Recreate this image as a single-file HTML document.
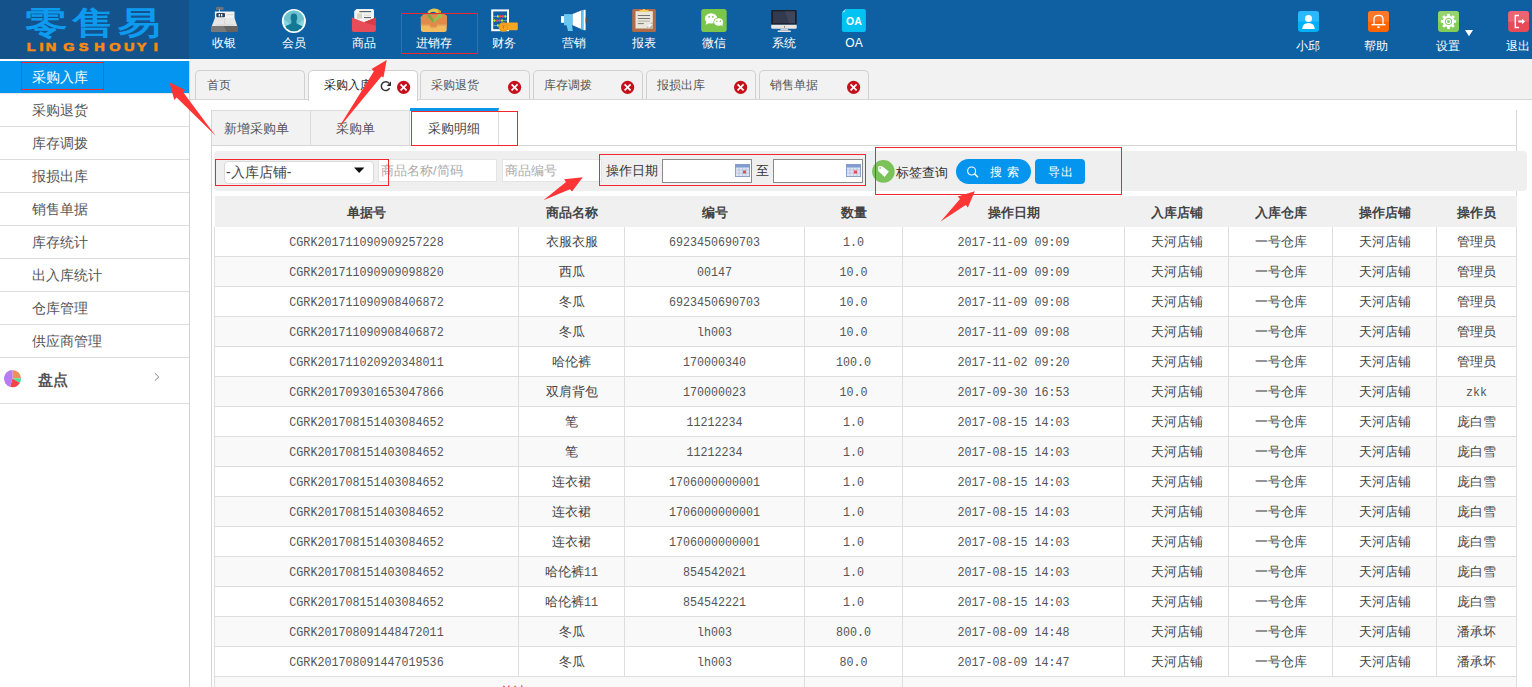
<!DOCTYPE html>
<html><head><meta charset="utf-8">
<style>
*{box-sizing:border-box;margin:0;padding:0}
html,body{width:1532px;height:687px;overflow:hidden;background:#fff;font-family:"Liberation Sans",sans-serif;color:#333}
.abs{position:absolute}
#hdr{position:absolute;left:0;top:0;width:1532px;height:59px;background:#0f5fa3}
#logo{position:absolute;left:0;top:0;width:189px;height:59px;background:#14528b}
.nt{position:absolute;top:34px;width:70px;text-align:center;color:#fff;font-size:12px;line-height:18px;font-weight:500}
.rt{position:absolute;top:37px;width:70px;text-align:center;color:#fff;font-size:12px;line-height:18px;font-weight:500}
#side{position:absolute;left:0;top:61px;width:190px;height:626px;background:#fff;border-right:1px solid #d2d2d2}
#side .it{height:33px;border-bottom:1px solid #dcdcdc;font-size:14px;line-height:32px;padding-left:32px;color:#555}
#side .it.act{background:#0395ef;color:#fff;border-bottom-color:#e6e6e6}
#tabbar{position:absolute;left:190px;top:59px;width:1342px;height:41px;background:#f2f2f2;border-bottom:1px solid #d6d6d6}
.tab{position:absolute;top:11px;height:29px;width:110px;border:1px solid #d0d0d0;border-bottom:none;border-radius:5px 5px 0 0;background:#f2f2f2;font-size:12px;color:#555;line-height:28px}
.tab.act{background:#fff;color:#222;height:31px}
.tab span{top:-0.5px}
#panel{position:absolute;left:211px;top:110px;width:1306px;height:600px;border-left:1px solid #d6d6d6;border-right:1px solid #d6d6d6}
#subbar{position:absolute;left:0;top:0;width:1304px;height:36px;border-bottom:1px solid #d6d6d6}
.stab{position:absolute;top:0;height:35px;width:100px;background:#f2f2f2;border-right:1px solid #dcdcdc;border-top:1px solid #dcdcdc;font-size:13px;color:#555;line-height:36px}
.stab.act{background:#fff;border-top:3px solid #0896ec;top:-2px;height:37px;line-height:36px;color:#444}
#fbar{position:absolute;left:214px;top:151px;width:1313px;height:40px;background:#efefef;border-radius:4px}
.inp{position:absolute;background:#fff;border:1px solid #e4e4e4;font-size:13px;color:#aaa;line-height:21px;padding-left:2px}
.red{position:absolute;border:1.5px solid #f0282d}
table{position:absolute;left:214px;top:196px;border-collapse:collapse;table-layout:fixed;width:1302.5px}
th{height:31px;padding-top:2px !important;background:#f0f0f0;font-size:13px;font-weight:bold;color:#444;text-align:center;padding:0}
td{height:30px;border:1px solid #dedede;text-align:center;font-size:13px;color:#444;padding:2px 0 0 0;white-space:nowrap}
tr.ev td{background:#f9f9f9}
tbody tr:first-child td{border-top:none;height:29px}
.m{font-family:"Liberation Mono",monospace;font-size:11.7px;color:#555;display:inline-block;transform:scaleY(1.12)}
.c{font-size:13px}
td.tot span{color:#e02020;font-size:13px;position:relative;top:0px;left:3px}
</style></head><body>
<div id="hdr">
  <div id="logo">
    <svg class="abs" style="left:0;top:0" width="189" height="59">
      <g transform="scale(1.33,1)"><text x="18.6 53.9 88.9" y="34.5" font-family="Liberation Sans" font-weight="bold" font-size="32" fill="#0d9bf0">零售易</text></g>
      <g transform="scale(1.32,1)"><text x="20.2 29.9 34.7 47.9 59.6 71.4 82.7 93.9 103.7 116.5" y="51" font-family="Liberation Sans" font-weight="bold" font-size="11" fill="#fb8a0c" stroke="#fb8a0c" stroke-width="0.6">LINGSHOUYI</text></g>
    </svg>
  </div>
  <svg class="abs" style="left:0;top:0" width="1532" height="59" viewBox="0 0 1532 59">
<!-- 收银 cash register -->
<rect x="216" y="7" width="7.6" height="3" rx="0.8" fill="#6f7378"/>
<rect x="219" y="9.5" width="1" height="2.5" fill="#cfd2d4"/>
<rect x="214.9" y="11.5" width="19.6" height="7" fill="#f2f2f2"/>
<path d="M214.9 18 L234.5 18 L237.2 26 L211.8 26 Z" fill="#e6e6e6"/>
<path d="M224.6 18.5 L224.6 25 M216.5 25 L224 25 M225.2 25 L234 25" stroke="#cfcfcf" stroke-width="0.7"/>
<rect x="216.3" y="13" width="8.7" height="4.2" rx="1" fill="#2b3f5e"/>
<rect x="218.6" y="14" width="1.3" height="2.4" fill="#fff"/>
<rect x="221" y="14" width="1.3" height="2.4" fill="#fff"/>
<rect x="226.5" y="14.2" width="7" height="1" fill="#d4d4d4"/>
<rect x="210.9" y="26" width="27" height="6" rx="0.8" fill="#7a7a7a"/>
<path d="M223.5 26 L237.9 26 L237.9 32 L227 32 Z" fill="#646464"/>
<!-- 会员 -->
<circle cx="293.9" cy="20.9" r="12" fill="#fff"/>
<circle cx="293.9" cy="20.9" r="10.3" fill="#86d8e0"/>
<path d="M283.7 19.3 A10.3 10.3 0 0 1 304.1 19.3 L294 27 Z" fill="#6cc2cc"/>
<clipPath id="cp1"><circle cx="293.9" cy="20.9" r="10.3"/></clipPath>
<g clip-path="url(#cp1)" fill="#137896">
<ellipse cx="293.9" cy="17.8" rx="3.3" ry="4.2"/>
<path d="M291.6 20.5 L296.2 20.5 L296.6 23.5 L303 26.5 L304 32 L284 32 L284.8 26.5 L291.2 23.5 Z"/>
</g>
<!-- 商品 -->
<path d="M356.5 8.9 L372.5 8.9 Q374 8.9 374 10.4 L374 23 L354.2 23 L354.2 11.2 Z" fill="#f3f3f1"/>
<rect x="359.3" y="11" width="11.8" height="1.2" fill="#5d6570"/>
<rect x="357" y="13.6" width="5" height="5" fill="#d6d3c6"/>
<rect x="364" y="14.6" width="7" height="0.9" fill="#d6d6d6"/>
<rect x="364" y="17" width="7" height="1.1" fill="#5d6570"/>
<path d="M351.9 17.6 L364 22.3 L375.9 17.6 L375.9 30 Q375.9 32 373.9 32 L353.9 32 Q351.9 32 351.9 30 Z" fill="#e84c58"/>
<path d="M364 22.3 L375.9 17.6 L375.9 26 Z" fill="#d63c48"/>
<!-- 进销存 -->
<path d="M423.5 14.6 L444.2 14.6 Q446.7 14.6 446.7 17.1 L446.7 29.5 Q446.7 32 444.2 32 L423.4 32 Q420.9 32 420.9 29.5 L420.9 17.2 Z" fill="#f2bb62"/>
<path d="M423.5 14.6 L444.2 14.6 Q446.7 14.6 446.7 17.1 L446.7 24.8 L437.5 24.8 Q436.8 27.3 434.5 27.3 L432.5 27.3 Q430.2 27.3 429.5 24.8 L420.9 24.8 L420.9 17.2 Z" fill="#de8b4b"/>
<path d="M420.9 24.8 L429.5 24.8 Q430.2 27.3 432.5 27.3 L434.5 27.3 Q436.8 27.3 437.5 24.8 L446.7 24.8 L446.7 26 L437.8 26 Q437 28.3 434.5 28.3 L432.5 28.3 Q430 28.3 429.2 26 L420.9 26 Z" fill="#e9a457"/>
<path d="M427.2 12.2 Q433 5.5 440.8 11 L441.5 17 L438.6 14.5 Q434 9.8 429.5 13.2 Z" fill="#e6c84e"/>
<path d="M438.6 14.5 L441.5 17 L440.8 11 Q439.5 10 438 9.5 Z" fill="#c9a232"/>
<path d="M427 15.8 L429.4 14 L433.4 19.6 L438.2 15.6 L436.8 14.5 L441.8 13.8 L441 18.6 L439.7 17.4 L433.4 22.8 Z" fill="#8fc454"/>
<path d="M427 15.8 L429.4 14 L433.4 19.6 L433.4 22.8 Z" fill="#72a83e"/>
<!-- 财务 -->
<rect x="492.2" y="10.4" width="15.8" height="19.8" fill="none" stroke="#fff" stroke-width="2"/>
<path d="M493.2 16.4 L507 16.4 M493.2 20.6 L507 20.6 M493.2 25.5 L500 25.5" stroke="#b8c8d8" stroke-width="0.6"/>
<g fill="#b6f000"><ellipse cx="497.9" cy="16.4" rx="0.9" ry="1.4"/><ellipse cx="505.3" cy="16.4" rx="0.9" ry="1.4"/><ellipse cx="494.5" cy="20.6" rx="0.9" ry="1.4"/><ellipse cx="502" cy="20.6" rx="0.9" ry="1.4"/><ellipse cx="497.9" cy="25.5" rx="0.9" ry="1.4"/></g>
<g fill="#f04858"><ellipse cx="500.3" cy="16.4" rx="0.9" ry="1.4"/><ellipse cx="502.8" cy="16.4" rx="0.9" ry="1.4"/><ellipse cx="496.9" cy="20.6" rx="0.9" ry="1.4"/><ellipse cx="499.5" cy="20.6" rx="0.9" ry="1.4"/></g>
<rect x="506" y="22.5" width="11.8" height="7.8" rx="1" fill="#f5a623"/>
<circle cx="503.4" cy="27" r="4.8" fill="#f19a14"/>
<circle cx="503.4" cy="27" r="3.3" fill="#f5a522"/>
<path d="M502.3 25 L503.4 26.6 L504.5 25 M503.4 26.6 L503.4 29" stroke="#c0601a" stroke-width="0.6" fill="none"/>
<!-- 营销 -->
<rect x="561" y="16.1" width="3" height="6.7" fill="#fff"/>
<rect x="564" y="14.1" width="8.6" height="11.2" fill="#66c8ee"/>
<path d="M566.5 25 L572 25 L572.8 31 L568 31 Z" fill="#66c8ee"/>
<path d="M572.6 14.1 L581.2 10.6 L581.2 29.1 L572.6 25.3 Z" fill="#fff"/>
<rect x="581.2" y="10.2" width="2.3" height="19.5" fill="#66c8ee"/>
<rect x="583.5" y="9.8" width="2.1" height="20.4" fill="#fff"/>
<path d="M585.6 17.5 A2.4 2.8 0 0 1 585.6 23.3 Z" fill="#5a4e48"/>
<!-- 报表 -->
<rect x="632.2" y="8.9" width="23.7" height="23.1" rx="1.5" fill="#b06c48"/>
<path d="M635.5 11.2 L652.8 11.2 L652.8 28.5 L635.5 28.5 Z" fill="#e9e7dd"/>
<path d="M646 28.5 L652.8 21.5 L652.8 28.5 Z" fill="#b5b3a9"/>
<path d="M648.5 28.5 L652.8 24 L648.5 24.5 Z" fill="#fff"/>
<path d="M638.8 12 Q638.8 10 641 10 L642.5 10 Q643.5 8 645.5 10 L647 10 Q649.3 10 649.3 12 Z" fill="#f5cf5d"/>
<g fill="#6b6a63"><rect x="637.8" y="15" width="12.3" height="0.9"/><rect x="637.8" y="18" width="12.3" height="0.9"/><rect x="637.8" y="20.6" width="12.3" height="1" fill="#b2b0a7"/><rect x="637.8" y="23.2" width="6" height="0.9"/></g>
<!-- 微信 -->
<rect x="701.2" y="8.9" width="25.5" height="23.1" rx="2.8" fill="#7bc54d"/>
<ellipse cx="711.1" cy="18.4" rx="6.2" ry="5.2" fill="#fff"/>
<path d="M706.5 21 L705.8 24.8 L709.5 22.8 Z" fill="#fff"/>
<ellipse cx="718.6" cy="22" rx="5.2" ry="4.5" fill="#7bc54d"/>
<ellipse cx="718.6" cy="22" rx="4.4" ry="3.8" fill="#fff"/>
<path d="M720.5 24.5 L722.8 26.5 L722.2 23.5 Z" fill="#fff"/>
<g fill="#7bc54d"><circle cx="709.1" cy="16.8" r="0.9"/><circle cx="712.8" cy="16.8" r="0.9"/><circle cx="716.8" cy="21.3" r="0.75"/><circle cx="720.4" cy="21.3" r="0.75"/></g>
<!-- 系统 -->
<path d="M771.2 11 Q771.2 9.9 772.3 9.9 L795.6 9.9 Q796.7 9.9 796.7 11 L796.7 24.8 L771.2 24.8 Z" fill="#1c1e2a"/>
<rect x="773" y="11.4" width="22" height="11.8" fill="#333a4f"/>
<path d="M785 11.4 L795 11.4 L795 23.2 L789 23.2 Z" fill="#3f4659"/>
<path d="M771.2 24.8 L796.7 24.8 L796.7 27.5 Q796.7 28.7 795.5 28.7 L772.4 28.7 Q771.2 28.7 771.2 27.5 Z" fill="#e7e6e3"/>
<rect x="784" y="26.3" width="0.8" height="1.2" fill="#333"/>
<path d="M781 28.7 L787.6 28.7 L788.8 30.6 L779.8 30.6 Z" fill="#cfcfcd"/>
<rect x="777.5" y="30.4" width="13.5" height="1.5" rx="0.7" fill="#e5e5e3"/>
<!-- OA -->
<path d="M845.5 8.9 L863.9 8.9 Q865.9 8.9 865.9 10.9 L865.9 30 Q865.9 32 863.9 32 L843.9 32 Q841.9 32 841.9 30 L841.9 12.5 Z" fill="#00c2f3"/>
<path d="M841.9 12.5 L845.5 8.9 L844.8 12 Z" fill="#9fe6fb"/>
<text x="853.9" y="25" text-anchor="middle" font-family="Liberation Sans" font-weight="bold" font-size="10.5" fill="#fff">OA</text>
<!-- 小邱 -->
<rect x="1298" y="11" width="21" height="21" rx="3.2" fill="#00b0f8"/>
<path d="M1298 21.5 L1298 14.2 Q1298 11 1301.2 11 L1315.8 11 Q1319 11 1319 14.2 L1319 21.5 Z" fill="#2ab9ff"/>
<circle cx="1308.5" cy="18.5" r="3.5" fill="#fff"/>
<path d="M1302.2 29 Q1302.5 23 1308.5 23 Q1314.5 23 1314.8 29 Z" fill="#fff"/>
<!-- 帮助 -->
<rect x="1368" y="11" width="21" height="21" rx="3.2" fill="#ff6600"/>
<path d="M1368 21.5 L1368 14.2 Q1368 11 1371.2 11 L1385.8 11 Q1389 11 1389 14.2 L1389 21.5 Z" fill="#ff782a"/>
<path d="M1374 24.6 L1374 19 Q1374 15.3 1378.5 15.3 Q1383 15.3 1383 19 L1383 24.6" fill="none" stroke="#fff" stroke-width="1.3"/>
<rect x="1371.5" y="24" width="14" height="1.4" fill="#fff"/>
<ellipse cx="1378.5" cy="27.3" rx="1.4" ry="1" fill="#fff"/>
<!-- 设置 -->
<rect x="1438" y="11" width="21" height="21" rx="3.2" fill="#82cc58"/>
<path d="M1438 21.5 L1438 14.2 Q1438 11 1441.2 11 L1455.8 11 Q1459 11 1459 14.2 L1459 21.5 Z" fill="#96d46e"/>
<g fill="#fff" transform="translate(1448.5 21.5)">
<circle r="5.8"/>
<g id="teeth"><rect x="-1.3" y="-7.6" width="2.6" height="3"/><rect x="-1.3" y="4.6" width="2.6" height="3"/><rect x="-7.6" y="-1.3" width="3" height="2.6"/><rect x="4.6" y="-1.3" width="3" height="2.6"/></g>
<g transform="rotate(45)"><rect x="-1.3" y="-7.6" width="2.6" height="3"/><rect x="-1.3" y="4.6" width="2.6" height="3"/><rect x="-7.6" y="-1.3" width="3" height="2.6"/><rect x="4.6" y="-1.3" width="3" height="2.6"/></g>
</g>
<circle cx="1448.5" cy="21.5" r="3.6" fill="#88cf5f"/>
<circle cx="1448.5" cy="21.5" r="2.6" fill="#fff"/>
<circle cx="1448.5" cy="21.5" r="1.5" fill="#88cf5f"/>
<path d="M1465 30 L1473 30 L1469 36.3 Z" fill="#fff"/>
<!-- 退出 -->
<rect x="1508.2" y="11" width="20.8" height="21" rx="3.2" fill="#e84a58"/>
<path d="M1508.2 21.7 L1508.2 14.2 Q1508.2 11 1511.4 11 L1525.8 11 Q1529 11 1529 14.2 L1529 21.7 Z" fill="#ee6572"/>
<path d="M1519 15.5 L1515.3 15.5 L1515.3 27.5 L1519 27.5" fill="none" stroke="#fff" stroke-width="1.4"/>
<rect x="1518.3" y="20.5" width="3.8" height="2" fill="#fff"/>
<path d="M1522 18.8 L1525 21.5 L1522 24.2 Z" fill="#fff"/>
</svg>

  <div class="nt" style="left:189px">收银</div>
  <div class="nt" style="left:259px">会员</div>
  <div class="nt" style="left:329px">商品</div>
  <div class="nt" style="left:399px">进销存</div>
  <div class="nt" style="left:469px">财务</div>
  <div class="nt" style="left:539px">营销</div>
  <div class="nt" style="left:609px">报表</div>
  <div class="nt" style="left:679px">微信</div>
  <div class="nt" style="left:749px">系统</div>
  <div class="nt" style="left:819px">OA</div>
  <div class="rt" style="left:1273px">小邱</div>
  <div class="rt" style="left:1341px">帮助</div>
  <div class="rt" style="left:1413px">设置</div>
  <div class="rt" style="left:1483px">退出</div>
</div>
<div id="side">
  <div class="it act">采购入库</div>
  <div class="it">采购退货</div>
  <div class="it">库存调拨</div>
  <div class="it">报损出库</div>
  <div class="it">销售单据</div>
  <div class="it">库存统计</div>
  <div class="it">出入库统计</div>
  <div class="it">仓库管理</div>
  <div class="it">供应商管理</div>
  <div class="it" style="height:46px;line-height:44px;padding-left:38px;font-weight:bold;font-size:15px;color:#555">盘点</div>
</div>
<svg class="abs" style="left:0;top:358px" width="190" height="46">
  <path d="M12.5 20.6 L12.5 12 A8.6 8.6 0 0 1 21.1 20.6 Z" fill="#e8925c"/>
  <path d="M12.5 20.6 L21.1 20.6 A8.6 8.6 0 0 1 19.8 25 Z" fill="#3ee79c"/>
  <path d="M12.5 20.6 L19.8 25 A8.6 8.6 0 0 1 10 28.8 Z" fill="#f24449"/>
  <path d="M12.5 20.6 L10 28.8 A8.6 8.6 0 0 1 12.5 12 Z" fill="#b77cf2"/>
  <path d="M154.8 15.2 L158.8 19 L154.8 22.6" fill="none" stroke="#777" stroke-width="0.9"/>
</svg>
<div id="tabbar">
  <div class="tab" style="left:5px"><span class="abs" style="left:11px">首页</span></div>
  <div class="tab act" style="left:118px"><span class="abs" style="left:15px">采购入库</span></div>
  <div class="tab" style="left:230px"><span class="abs" style="left:10px">采购退货</span></div>
  <div class="tab" style="left:343px"><span class="abs" style="left:10px">库存调拨</span></div>
  <div class="tab" style="left:456px"><span class="abs" style="left:10px">报损出库</span></div>
  <div class="tab" style="left:569px"><span class="abs" style="left:10px">销售单据</span></div>
</div>
<svg class="abs" style="left:0;top:59px" width="1532" height="41">
  <path d="M389.6 29.2 A4.4 4.4 0 1 1 389 24.2" fill="none" stroke="#333" stroke-width="1.5"/>
  <path d="M391 22.3 L391 27 L386.6 27 Z" fill="#333"/>
  <g id="xx">
  </g>
  <circle cx="403.6" cy="28.3" r="6.6" fill="#c4111c"/><path d="M400.6 25.3 L406.6 31.3 M406.6 25.3 L400.6 31.3" stroke="#fff" stroke-width="1.7"/><circle cx="514.6" cy="28.3" r="6.6" fill="#c4111c"/><path d="M511.6 25.3 L517.6 31.3 M517.6 25.3 L511.6 31.3" stroke="#fff" stroke-width="1.7"/><circle cx="627.6" cy="28.3" r="6.6" fill="#c4111c"/><path d="M624.6 25.3 L630.6 31.3 M630.6 25.3 L624.6 31.3" stroke="#fff" stroke-width="1.7"/><circle cx="740.6" cy="28.3" r="6.6" fill="#c4111c"/><path d="M737.6 25.3 L743.6 31.3 M743.6 25.3 L737.6 31.3" stroke="#fff" stroke-width="1.7"/><circle cx="853.6" cy="28.3" r="6.6" fill="#c4111c"/><path d="M850.6 25.3 L856.6 31.3 M856.6 25.3 L850.6 31.3" stroke="#fff" stroke-width="1.7"/>
</svg>
<div id="panel">
  <div id="subbar">
    <div class="stab" style="left:0;width:99px"><span class="abs" style="left:12px">新增采购单</span></div>
    <div class="stab" style="left:99px;width:99px"><span class="abs" style="left:25px">采购单</span></div>
    <div class="stab act" style="left:198px;width:89px"><span class="abs" style="left:18px">采购明细</span></div>
  </div>
</div>
<div id="fbar"></div>
<div class="inp" style="left:224px;top:161px;width:150px;height:23px;border-radius:4px;color:#444;border-color:#dadada;font-size:14px;padding-left:1px">-入库店铺-</div>
<svg class="abs" style="left:354px;top:167px" width="11" height="7"><path d="M0 0.5 L10.4 0.5 L5.2 6 Z" fill="#111"/></svg>
<div class="inp" style="left:378px;top:159px;width:119px;height:23px">商品名称/简码</div>
<div class="inp" style="left:502px;top:159px;width:100px;height:23px">商品编号</div>
<div class="abs" style="left:606px;top:162px;font-size:13px;line-height:18px;color:#333">操作日期</div>
<div class="inp" style="left:662px;top:159px;width:90px;height:24px;border:1px solid #8a8a8a"></div>
<div class="abs" style="left:756px;top:162px;font-size:13px;line-height:18px;color:#333">至</div>
<div class="inp" style="left:773px;top:159px;width:90px;height:24px;border:1px solid #8a8a8a"></div>
<svg class="abs" style="left:735px;top:164px" width="15" height="13"><rect x="0.5" y="0.5" width="14" height="12" fill="#dde6f2" stroke="#8aa2c8"/><rect x="0.5" y="0.5" width="14" height="3" fill="#7f9bd0"/><path d="M1 6 H14 M1 9 H14 M4 3.5 V12.5 M7.5 3.5 V12.5 M11 3.5 V12.5" stroke="#a9bad8" stroke-width="0.6"/><rect x="8" y="6.5" width="3" height="3" fill="#e05050"/></svg><svg class="abs" style="left:846px;top:164px" width="15" height="13"><rect x="0.5" y="0.5" width="14" height="12" fill="#dde6f2" stroke="#8aa2c8"/><rect x="0.5" y="0.5" width="14" height="3" fill="#7f9bd0"/><path d="M1 6 H14 M1 9 H14 M4 3.5 V12.5 M7.5 3.5 V12.5 M11 3.5 V12.5" stroke="#a9bad8" stroke-width="0.6"/><rect x="8" y="6.5" width="3" height="3" fill="#e05050"/></svg>
<svg class="abs" style="left:872px;top:160px" width="23" height="23">
  <circle cx="11.4" cy="11.4" r="11.3" fill="#7cc25a"/>
  <path d="M6.1 7.2 Q6.3 6 7.8 6 L10.4 6.4 L16.9 11.6 L12.6 17.1 L6.3 10.9 Z" fill="#fff"/>
  <circle cx="8.1" cy="8" r="0.9" fill="#9ccf80"/>
</svg>
<div class="abs" style="left:896px;top:164px;font-size:13px;line-height:18px;color:#333">标签查询</div>
<div class="abs" style="left:956px;top:159px;width:75px;height:25px;border-radius:13px;background:#0496ee;color:#fff;font-size:12px;line-height:26px"><span class="abs" style="left:34px">搜</span><span class="abs" style="left:51px">索</span>
<svg class="abs" style="left:10px;top:6px" width="14" height="14"><circle cx="5.6" cy="6" r="4" fill="none" stroke="#fff" stroke-width="1.1"/><path d="M8.5 8.8 L12 12.2" stroke="#fff" stroke-width="1.6"/></svg></div>
<div class="abs" style="left:1035px;top:159px;width:50px;height:25px;border-radius:4px;background:#0496ee;color:#fff;font-size:12px;line-height:26px;text-align:center;letter-spacing:0.5px;padding-left:1px">导出</div>
<table>
<colgroup><col style="width:304.0px"><col style="width:106.0px"><col style="width:180.0px"><col style="width:98.0px"><col style="width:222.0px"><col style="width:104.0px"><col style="width:104.0px"><col style="width:104.0px"><col style="width:80.0px"></colgroup>
<thead><tr><th>单据号</th><th>商品名称</th><th>编号</th><th>数量</th><th>操作日期</th><th>入库店铺</th><th>入库仓库</th><th>操作店铺</th><th>操作员</th></tr></thead>
<tbody>
<tr class="od"><td><span class="m">CGRK201711090909257228</span></td><td><span class="c">衣服衣服</span></td><td><span class="m">6923450690703</span></td><td><span class="m">1.0</span></td><td><span class="m">2017-11-09 09:09</span></td><td><span class="c">天河店铺</span></td><td><span class="c">一号仓库</span></td><td><span class="c">天河店铺</span></td><td><span class="c">管理员</span></td></tr>
<tr class="ev"><td><span class="m">CGRK201711090909098820</span></td><td><span class="c">西瓜</span></td><td><span class="m">00147</span></td><td><span class="m">10.0</span></td><td><span class="m">2017-11-09 09:09</span></td><td><span class="c">天河店铺</span></td><td><span class="c">一号仓库</span></td><td><span class="c">天河店铺</span></td><td><span class="c">管理员</span></td></tr>
<tr class="od"><td><span class="m">CGRK201711090908406872</span></td><td><span class="c">冬瓜</span></td><td><span class="m">6923450690703</span></td><td><span class="m">10.0</span></td><td><span class="m">2017-11-09 09:08</span></td><td><span class="c">天河店铺</span></td><td><span class="c">一号仓库</span></td><td><span class="c">天河店铺</span></td><td><span class="c">管理员</span></td></tr>
<tr class="ev"><td><span class="m">CGRK201711090908406872</span></td><td><span class="c">冬瓜</span></td><td><span class="m">lh003</span></td><td><span class="m">10.0</span></td><td><span class="m">2017-11-09 09:08</span></td><td><span class="c">天河店铺</span></td><td><span class="c">一号仓库</span></td><td><span class="c">天河店铺</span></td><td><span class="c">管理员</span></td></tr>
<tr class="od"><td><span class="m">CGRK201711020920348011</span></td><td><span class="c">哈伦裤</span></td><td><span class="m">170000340</span></td><td><span class="m">100.0</span></td><td><span class="m">2017-11-02 09:20</span></td><td><span class="c">天河店铺</span></td><td><span class="c">一号仓库</span></td><td><span class="c">天河店铺</span></td><td><span class="c">管理员</span></td></tr>
<tr class="ev"><td><span class="m">CGRK201709301653047866</span></td><td><span class="c">双肩背包</span></td><td><span class="m">170000023</span></td><td><span class="m">10.0</span></td><td><span class="m">2017-09-30 16:53</span></td><td><span class="c">天河店铺</span></td><td><span class="c">一号仓库</span></td><td><span class="c">天河店铺</span></td><td><span class="m">zkk</span></td></tr>
<tr class="od"><td><span class="m">CGRK201708151403084652</span></td><td><span class="c">笔</span></td><td><span class="m">11212234</span></td><td><span class="m">1.0</span></td><td><span class="m">2017-08-15 14:03</span></td><td><span class="c">天河店铺</span></td><td><span class="c">一号仓库</span></td><td><span class="c">天河店铺</span></td><td><span class="c">庞白雪</span></td></tr>
<tr class="ev"><td><span class="m">CGRK201708151403084652</span></td><td><span class="c">笔</span></td><td><span class="m">11212234</span></td><td><span class="m">1.0</span></td><td><span class="m">2017-08-15 14:03</span></td><td><span class="c">天河店铺</span></td><td><span class="c">一号仓库</span></td><td><span class="c">天河店铺</span></td><td><span class="c">庞白雪</span></td></tr>
<tr class="od"><td><span class="m">CGRK201708151403084652</span></td><td><span class="c">连衣裙</span></td><td><span class="m">1706000000001</span></td><td><span class="m">1.0</span></td><td><span class="m">2017-08-15 14:03</span></td><td><span class="c">天河店铺</span></td><td><span class="c">一号仓库</span></td><td><span class="c">天河店铺</span></td><td><span class="c">庞白雪</span></td></tr>
<tr class="ev"><td><span class="m">CGRK201708151403084652</span></td><td><span class="c">连衣裙</span></td><td><span class="m">1706000000001</span></td><td><span class="m">1.0</span></td><td><span class="m">2017-08-15 14:03</span></td><td><span class="c">天河店铺</span></td><td><span class="c">一号仓库</span></td><td><span class="c">天河店铺</span></td><td><span class="c">庞白雪</span></td></tr>
<tr class="od"><td><span class="m">CGRK201708151403084652</span></td><td><span class="c">连衣裙</span></td><td><span class="m">1706000000001</span></td><td><span class="m">1.0</span></td><td><span class="m">2017-08-15 14:03</span></td><td><span class="c">天河店铺</span></td><td><span class="c">一号仓库</span></td><td><span class="c">天河店铺</span></td><td><span class="c">庞白雪</span></td></tr>
<tr class="ev"><td><span class="m">CGRK201708151403084652</span></td><td><span class="c">哈伦裤</span><span class="m">11</span></td><td><span class="m">854542021</span></td><td><span class="m">1.0</span></td><td><span class="m">2017-08-15 14:03</span></td><td><span class="c">天河店铺</span></td><td><span class="c">一号仓库</span></td><td><span class="c">天河店铺</span></td><td><span class="c">庞白雪</span></td></tr>
<tr class="od"><td><span class="m">CGRK201708151403084652</span></td><td><span class="c">哈伦裤</span><span class="m">11</span></td><td><span class="m">854542221</span></td><td><span class="m">1.0</span></td><td><span class="m">2017-08-15 14:03</span></td><td><span class="c">天河店铺</span></td><td><span class="c">一号仓库</span></td><td><span class="c">天河店铺</span></td><td><span class="c">庞白雪</span></td></tr>
<tr class="ev"><td><span class="m">CGRK201708091448472011</span></td><td><span class="c">冬瓜</span></td><td><span class="m">lh003</span></td><td><span class="m">800.0</span></td><td><span class="m">2017-08-09 14:48</span></td><td><span class="c">天河店铺</span></td><td><span class="c">一号仓库</span></td><td><span class="c">天河店铺</span></td><td><span class="c">潘承坏</span></td></tr>
<tr class="od"><td><span class="m">CGRK201708091447019536</span></td><td><span class="c">冬瓜</span></td><td><span class="m">lh003</span></td><td><span class="m">80.0</span></td><td><span class="m">2017-08-09 14:47</span></td><td><span class="c">天河店铺</span></td><td><span class="c">一号仓库</span></td><td><span class="c">天河店铺</span></td><td><span class="c">潘承坏</span></td></tr>
<tr class="ev last"><td colspan="3" class="tot"><span>总计</span></td><td></td><td colspan="5"></td></tr>
</tbody>
</table>
<!-- annotations -->
<div class="red" style="left:401px;top:13px;width:77px;height:41px"></div>
<div class="red" style="left:21px;top:62px;width:83px;height:28px"></div>
<div class="red" style="left:411px;top:111px;width:107px;height:35px"></div>
<div class="red" style="left:215px;top:159px;width:174px;height:27px"></div>
<div class="red" style="left:599px;top:154px;width:267px;height:32px"></div>
<div class="red" style="left:875px;top:146.5px;width:247px;height:48px"></div>
<svg class="abs" style="left:0;top:0" width="1532" height="687" fill="#ff3535">
  <path d="M169.4 82.2 L185 89.9 L183.2 92.3 L215.6 135.7 L176.6 97.4 L174.3 100 Z"/>
  <path d="M386.7 60 L383.5 77.5 L381.5 76.3 L337.2 130 L373.9 71.3 L371.6 69 Z"/>
  <path d="M582.8 177.2 L572 191.5 L570 189.3 L543.4 200.2 L566 181.9 L564.1 179.3 Z"/>
  <path d="M974.8 191.3 L967.9 207.5 L965.7 205 L940.6 221.5 L960 199.1 L957.7 196.4 Z"/>
</svg>
</body></html>
